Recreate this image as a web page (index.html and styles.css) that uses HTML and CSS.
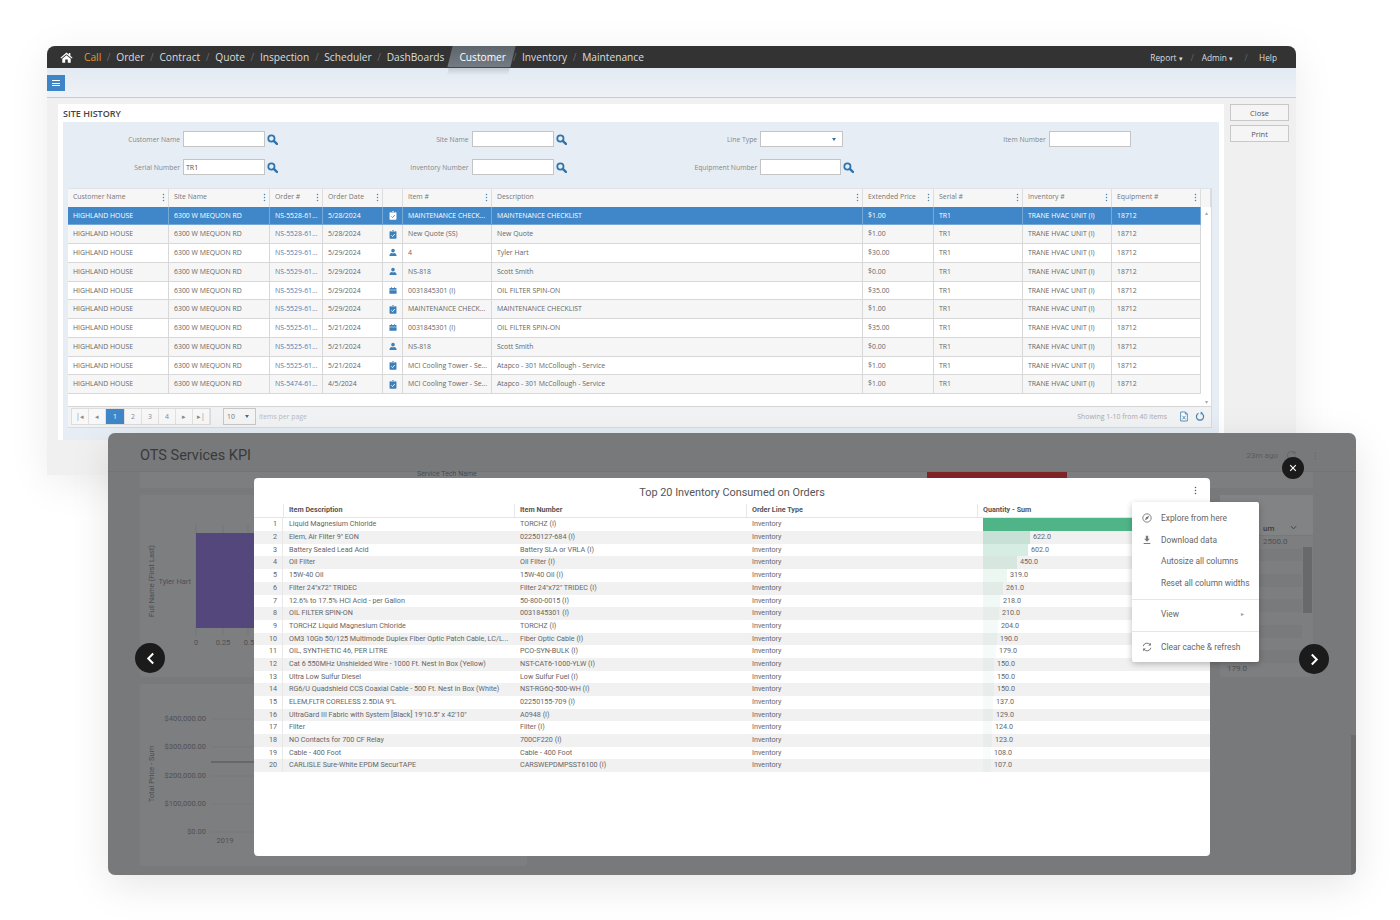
FILE: index.html
```html
<!DOCTYPE html>
<html lang="en">
<head>
    <meta charset="UTF-8">
    <title>Site History</title>
    <link rel="stylesheet" href="styles.css">
</head>
<body>
    <svg class="icon-defs" width="0" height="0">
        <symbol id="i-search" viewBox="0 0 12 12">
            <circle cx="4.8" cy="4.8" r="3.4" fill="none" stroke="currentColor" stroke-width="1.9"/>
            <path d="M7.4 7.4L10.8 10.8" stroke="currentColor" stroke-width="2.6" stroke-linecap="round"/>
        </symbol>
        <symbol id="i-clip" viewBox="0 0 10 12">
            <path d="M1.2 1.6H3.2V2.8H6.8V1.6H8.8A1 1 0 0 1 9.6 2.6V10.8A1 1 0 0 1 8.8 11.6H1.2A1 1 0 0 1 .4 10.8V2.6A1 1 0 0 1 1.2 1.6Z" fill="currentColor"/>
            <rect x="3.8" y=".4" width="2.4" height="1.9" rx=".5" fill="currentColor"/>
            <path d="M2.8 7.2L4.4 8.8L7.3 5.4" fill="none" stroke="var(--check, #fff)" stroke-width="1.2"/>
        </symbol>
        <symbol id="i-user" viewBox="0 0 12 12">
            <circle cx="6" cy="3.2" r="2.7" fill="currentColor"/>
            <path d="M.6 11.4C.6 8.2 2.6 6.8 4 6.6L6 7.4L8 6.6C9.4 6.8 11.4 8.2 11.4 11.4Z" fill="currentColor"/>
        </symbol>
        <symbol id="i-case" viewBox="0 0 12 12">
            <path d="M3 1H4.4V2.2H7.6V1H9V2.2H10.4A1 1 0 0 1 11.4 3.2V5H.6V3.2A1 1 0 0 1 1.6 2.2H3Z" fill="currentColor"/>
            <path d="M.6 5.8H11.4V10A1 1 0 0 1 10.4 11H1.6A1 1 0 0 1 .6 10Z" fill="currentColor"/>
        </symbol>
        <symbol id="i-dots" viewBox="0 0 4 12">
            <circle cx="2" cy="2" r="1"/><circle cx="2" cy="6" r="1"/><circle cx="2" cy="10" r="1"/>
        </symbol>
    </svg>

    <div class="app-window">
        <div class="topbar">
            <nav class="nav-main">
                <svg class="home-icon" viewBox="0 0 14 12"><path d="M7 .6L.4 6.3L1.2 7.2L7 2.4L12.8 7.2L13.6 6.3L11.2 4.2V1.2H9.6V2.8Z" fill="#fff"/><path d="M7 3.6L2.4 7.4V11.6H5.6V8.2H8.4V11.6H11.6V7.4Z" fill="#fff"/></svg>
                <a class="nav-call">Call</a><i>/</i>
                <a>Order</a><i>/</i>
                <a>Contract</a><i>/</i>
                <a>Quote</a><i>/</i>
                <a>Inspection</a><i>/</i>
                <a>Scheduler</a><i>/</i>
                <a>DashBoards</a><i>/</i>
                <a class="nav-active">Customer</a><i>/</i>
                <a>Inventory</a><i>/</i>
                <a>Maintenance</a>
            </nav>
            <nav class="nav-side">
                <a>Report <em>▾</em></a><i>/</i>
                <a>Admin <em>▾</em></a><i class="wide">/</i>
                <a>Help</a>
            </nav>
        </div>
        <div class="toolbar">
            <button class="menu-button"><span></span><span></span><span></span></button>
        </div>
        <div class="content">
            <div class="history-card">
                <h1>SITE HISTORY</h1>
                <div class="history-panel">
                    <div class="filters">
                        <div class="field"><label>Customer Name</label><input type="text"><svg class="search"><use href="#i-search"/></svg></div>
                        <div class="field"><label>Site Name</label><input type="text"><svg class="search"><use href="#i-search"/></svg></div>
                        <div class="field"><label>Line Type</label><div class="fake-select"><b></b></div></div>
                        <div class="field"><label>Item Number</label><input type="text"></div>
                        <div class="field"><label>Serial Number</label><input type="text" value="TR1"><svg class="search"><use href="#i-search"/></svg></div>
                        <div class="field"><label>Inventory Number</label><input type="text"><svg class="search"><use href="#i-search"/></svg></div>
                        <div class="field"><label>Equipment Number</label><input class="short" type="text"><svg class="search"><use href="#i-search"/></svg></div>
                    </div>

                    <div class="grid">
                        <div class="grid-head">
                            <div>Customer Name<svg class="dots"><use href="#i-dots"/></svg></div>
                            <div>Site Name<svg class="dots"><use href="#i-dots"/></svg></div>
                            <div>Order #<svg class="dots"><use href="#i-dots"/></svg></div>
                            <div>Order Date<svg class="dots"><use href="#i-dots"/></svg></div>
                            <div></div>
                            <div>Item #<svg class="dots"><use href="#i-dots"/></svg></div>
                            <div>Description<svg class="dots"><use href="#i-dots"/></svg></div>
                            <div>Extended Price<svg class="dots"><use href="#i-dots"/></svg></div>
                            <div>Serial #<svg class="dots"><use href="#i-dots"/></svg></div>
                            <div>Inventory #<svg class="dots"><use href="#i-dots"/></svg></div>
                            <div>Equipment #<svg class="dots"><use href="#i-dots"/></svg></div>
                            <div class="scroll-head"></div>
                        </div>
                        <div class="grid-scroller">
                            <div class="grid-body">
                                <div class="grid-row selected"><div>HIGHLAND HOUSE</div><div>6300 W MEQUON RD</div><div class="order">NS-5528-61...</div><div>5/28/2024</div><div class="type"><svg><use href="#i-clip"/></svg></div><div>MAINTENANCE CHECK...</div><div>MAINTENANCE CHECKLIST</div><div>$1.00</div><div>TR1</div><div>TRANE HVAC UNIT (I)</div><div>18712</div></div>
                                <div class="grid-row"><div>HIGHLAND HOUSE</div><div>6300 W MEQUON RD</div><div class="order">NS-5528-61...</div><div>5/28/2024</div><div class="type"><svg><use href="#i-clip"/></svg></div><div>New Quote (SS)</div><div>New Quote</div><div>$1.00</div><div>TR1</div><div>TRANE HVAC UNIT (I)</div><div>18712</div></div>
                                <div class="grid-row"><div>HIGHLAND HOUSE</div><div>6300 W MEQUON RD</div><div class="order">NS-5529-61...</div><div>5/29/2024</div><div class="type"><svg><use href="#i-user"/></svg></div><div>4</div><div>Tyler Hart</div><div>$30.00</div><div>TR1</div><div>TRANE HVAC UNIT (I)</div><div>18712</div></div>
                                <div class="grid-row"><div>HIGHLAND HOUSE</div><div>6300 W MEQUON RD</div><div class="order">NS-5529-61...</div><div>5/29/2024</div><div class="type"><svg><use href="#i-user"/></svg></div><div>NS-818</div><div>Scott Smith</div><div>$0.00</div><div>TR1</div><div>TRANE HVAC UNIT (I)</div><div>18712</div></div>
                                <div class="grid-row"><div>HIGHLAND HOUSE</div><div>6300 W MEQUON RD</div><div class="order">NS-5529-61...</div><div>5/29/2024</div><div class="type"><svg><use href="#i-case"/></svg></div><div>0031845301 (I)</div><div>OIL FILTER SPIN-ON</div><div>$35.00</div><div>TR1</div><div>TRANE HVAC UNIT (I)</div><div>18712</div></div>
                                <div class="grid-row"><div>HIGHLAND HOUSE</div><div>6300 W MEQUON RD</div><div class="order">NS-5529-61...</div><div>5/29/2024</div><div class="type"><svg><use href="#i-clip"/></svg></div><div>MAINTENANCE CHECK...</div><div>MAINTENANCE CHECKLIST</div><div>$1.00</div><div>TR1</div><div>TRANE HVAC UNIT (I)</div><div>18712</div></div>
                                <div class="grid-row"><div>HIGHLAND HOUSE</div><div>6300 W MEQUON RD</div><div class="order">NS-5525-61...</div><div>5/21/2024</div><div class="type"><svg><use href="#i-case"/></svg></div><div>0031845301 (I)</div><div>OIL FILTER SPIN-ON</div><div>$35.00</div><div>TR1</div><div>TRANE HVAC UNIT (I)</div><div>18712</div></div>
                                <div class="grid-row"><div>HIGHLAND HOUSE</div><div>6300 W MEQUON RD</div><div class="order">NS-5525-61...</div><div>5/21/2024</div><div class="type"><svg><use href="#i-user"/></svg></div><div>NS-818</div><div>Scott Smith</div><div>$0.00</div><div>TR1</div><div>TRANE HVAC UNIT (I)</div><div>18712</div></div>
                                <div class="grid-row"><div>HIGHLAND HOUSE</div><div>6300 W MEQUON RD</div><div class="order">NS-5525-61...</div><div>5/21/2024</div><div class="type"><svg><use href="#i-clip"/></svg></div><div>MCI Cooling Tower - Se...</div><div>Atapco - 301 McCollough - Service</div><div>$1.00</div><div>TR1</div><div>TRANE HVAC UNIT (I)</div><div>18712</div></div>
                                <div class="grid-row"><div>HIGHLAND HOUSE</div><div>6300 W MEQUON RD</div><div class="order">NS-5474-61...</div><div>4/5/2024</div><div class="type"><svg><use href="#i-clip"/></svg></div><div>MCI Cooling Tower - Se...</div><div>Atapco - 301 McCollough - Service</div><div>$1.00</div><div>TR1</div><div>TRANE HVAC UNIT (I)</div><div>18712</div></div>
                            </div>
                            <div class="grid-scrollbar"><span>▴</span><span>▾</span></div>
                        </div>
                        <div class="pager">
                            <div class="pages">
                                <a>|◂</a><a>◂</a><a class="current">1</a><a>2</a><a>3</a><a>4</a><a>▸</a><a>▸|</a>
                            </div>
                            <div class="page-size">10<b></b></div>
                            <span class="page-label">items per page</span>
                            <span class="page-count">Showing 1-10 from 40 items</span>
                            <svg class="pager-icon" viewBox="0 0 12 12"><path d="M2 .6H7.6L10 3V11.4H2Z" fill="#fff" stroke="#3d7fb5"/><path d="M7.6 .6V3H10M4.2 5.2L7.8 9.4M7.8 5.2L4.2 9.4" fill="none" stroke="#3d7fb5"/></svg>
                            <svg class="pager-icon" viewBox="0 0 12 12"><path d="M7.8 2.2A4.3 4.3 0 1 1 4.2 2.2" fill="none" stroke="#3d7fb5" stroke-width="1.4"/><path d="M6.8 .2V3.8L9.6 1.8Z" fill="#3d7fb5"/></svg>
                        </div>
                    </div>
                </div>
            </div>
            <div class="side-buttons">
                <button>Close</button>
                <button>Print</button>
            </div>
        </div>
    </div>

    <div class="kpi-window">
        <header class="kpi-header">
            <h2>OTS Services KPI</h2>
            <span class="kpi-age">23m ago</span>
            <svg class="kpi-refresh" viewBox="0 0 12 12"><path d="M9.6 3.4A4.4 4.4 0 1 0 10.4 6" fill="none" stroke="#66676a" stroke-width="1.1"/><path d="M10.4 1V4H7.4Z" fill="#66676a"/></svg>
            <svg class="kpi-dots"><use href="#i-dots"/></svg>
        </header>
        <div class="kpi-body">
            <div class="kpi-card kpi-top">
                <span class="tech-label">Service Tech Name</span>
                <span class="tech-bar"></span>
            </div>
            <div class="kpi-card kpi-person">
                <svg width="387" height="182">
                    <g stroke="#737476" stroke-width="1">
                        <path d="M56 30V140M83 30V140M108 30V140"/>
                    </g>
                    <rect x="56" y="38" width="331" height="95" fill="#54477b"/>
                    <text class="axis-title" transform="translate(14 86) rotate(-90)" text-anchor="middle">Full Name (First Last)</text>
                    <text class="axis" x="51" y="89" text-anchor="end">Tyler Hart</text>
                    <text class="axis" x="56" y="150" text-anchor="middle">0</text>
                    <text class="axis" x="83" y="150" text-anchor="middle">0.25</text>
                    <text class="axis" x="109" y="150" text-anchor="middle">0.5</text>
                </svg>
            </div>
            <div class="kpi-card kpi-side">
                <div class="side-head"><span>um</span><svg viewBox="0 0 8 5"><path d="M1 1L4 4L7 1" fill="none" stroke="#3f4042" stroke-width="1.1"/></svg></div>
                <div class="side-rows">
                    <div class="side-list">
                        <div class="side-first">2500.0</div><div></div><div></div><div></div><div></div><div></div><div></div><div></div><div></div><div></div><div class="side-last">179.0</div>
                    </div>
                    <div class="side-scroll"><span></span></div>
                </div>
            </div>
            <div class="kpi-card kpi-price">
                <svg width="387" height="182">
                    <g stroke="#77787a" stroke-width="1">
                        <path d="M71 35H387M71 63H387M71 92H387M71 120H387M71 148H387"/>
                    </g>
                    <path d="M71 78H387" stroke="#505154" stroke-width="1"/>
                    <path d="M120 148H140" stroke="#5f6f7e" stroke-width="1"/>
                    <text class="axis-title" transform="translate(14 90) rotate(-90)" text-anchor="middle">Total Price - Sum</text>
                    <text class="axis" x="66" y="37" text-anchor="end">$400,000.00</text>
                    <text class="axis" x="66" y="65" text-anchor="end">$300,000.00</text>
                    <text class="axis" x="66" y="94" text-anchor="end">$200,000.00</text>
                    <text class="axis" x="66" y="122" text-anchor="end">$100,000.00</text>
                    <text class="axis" x="66" y="150" text-anchor="end">$0.00</text>
                    <text class="axis" x="85" y="159" text-anchor="middle">2019</text>
                </svg>
            </div>
        </div>
        <div class="kpi-scrollbar"><span></span></div>

        <div class="modal">
            <div class="modal-title">Top 20 Inventory Consumed on Orders</div>
            <svg class="modal-dots"><use href="#i-dots"/></svg>
            <div class="modal-table">
                <div class="m-head"><div></div><div>Item Description</div><div>Item Number</div><div>Order Line Type</div><div>Quantity - Sum</div></div>
                <div class="m-row"><div>1</div><div>Liquid Magnesium Chloride</div><div>TORCHZ (I)</div><div>Inventory</div><div class="qty"><span class="qty-bar top-bar" style="width:189px"></span></div></div>
                <div class="m-row"><div>2</div><div>Elem, Air Filter 9" EON</div><div>02250127-684 (I)</div><div>Inventory</div><div class="qty"><span class="qty-bar" style="width:47px;opacity:.25"></span>622.0</div></div>
                <div class="m-row"><div>3</div><div>Battery Sealed Lead Acid</div><div>Battery SLA or VRLA (I)</div><div>Inventory</div><div class="qty"><span class="qty-bar" style="width:45px;opacity:.24"></span>602.0</div></div>
                <div class="m-row"><div>4</div><div>Oil Filter</div><div>Oil Filter (I)</div><div>Inventory</div><div class="qty"><span class="qty-bar" style="width:34px;opacity:.16"></span>450.0</div></div>
                <div class="m-row"><div>5</div><div>15W-40 Oil</div><div>15W-40 Oil (I)</div><div>Inventory</div><div class="qty"><span class="qty-bar" style="width:24px;opacity:.11"></span>319.0</div></div>
                <div class="m-row"><div>6</div><div>Filter 24"x72" TRIDEC</div><div>Filter 24"x72" TRIDEC (I)</div><div>Inventory</div><div class="qty"><span class="qty-bar" style="width:20px;opacity:.09"></span>261.0</div></div>
                <div class="m-row"><div>7</div><div>12.6% to 17.5% HCl Acid - per Gallon</div><div>50-800-0015 (I)</div><div>Inventory</div><div class="qty"><span class="qty-bar" style="width:17px;opacity:.08"></span>218.0</div></div>
                <div class="m-row"><div>8</div><div>OIL FILTER SPIN-ON</div><div>0031845301 (I)</div><div>Inventory</div><div class="qty"><span class="qty-bar" style="width:16px;opacity:.07"></span>210.0</div></div>
                <div class="m-row"><div>9</div><div>TORCHZ Liquid Magnesium Chloride</div><div>TORCHZ (I)</div><div>Inventory</div><div class="qty"><span class="qty-bar" style="width:15px;opacity:.07"></span>204.0</div></div>
                <div class="m-row"><div>10</div><div>OM3 10Gb 50/125 Multimode Duplex Fiber Optic Patch Cable, LC/L...</div><div>Fiber Optic Cable (I)</div><div>Inventory</div><div class="qty"><span class="qty-bar" style="width:14px;opacity:.07"></span>190.0</div></div>
                <div class="m-row"><div>11</div><div>OIL, SYNTHETIC 46, PER LITRE</div><div>PCO-SYN-BULK (I)</div><div>Inventory</div><div class="qty"><span class="qty-bar" style="width:13px;opacity:.06"></span>179.0</div></div>
                <div class="m-row"><div>12</div><div>Cat 6 550MHz Unshielded Wire - 1000 Ft. Nest In Box (Yellow)</div><div>NST-CAT6-1000-YLW (I)</div><div>Inventory</div><div class="qty"><span class="qty-bar" style="width:11px;opacity:.05"></span>150.0</div></div>
                <div class="m-row"><div>13</div><div>Ultra Low Sulfur Diesel</div><div>Low Sulfur Fuel (I)</div><div>Inventory</div><div class="qty"><span class="qty-bar" style="width:11px;opacity:.05"></span>150.0</div></div>
                <div class="m-row"><div>14</div><div>RG6/U Quadshield CCS Coaxial Cable - 500 Ft. Nest in Box (White)</div><div>NST-RG6Q-500-WH (I)</div><div>Inventory</div><div class="qty"><span class="qty-bar" style="width:11px;opacity:.05"></span>150.0</div></div>
                <div class="m-row"><div>15</div><div>ELEM,FLTR CORELESS 2.5DIA 9"L</div><div>02250155-709 (I)</div><div>Inventory</div><div class="qty"><span class="qty-bar" style="width:10px;opacity:.05"></span>137.0</div></div>
                <div class="m-row"><div>16</div><div>UltraGard III Fabric with System [Black] 19'10.5" x 42'10"</div><div>A0948 (I)</div><div>Inventory</div><div class="qty"><span class="qty-bar" style="width:10px;opacity:.05"></span>129.0</div></div>
                <div class="m-row"><div>17</div><div>Filter</div><div>Filter (I)</div><div>Inventory</div><div class="qty"><span class="qty-bar" style="width:9px;opacity:.05"></span>124.0</div></div>
                <div class="m-row"><div>18</div><div>NO Contacts for 700 CF Relay</div><div>700CF220 (I)</div><div>Inventory</div><div class="qty"><span class="qty-bar" style="width:9px;opacity:.05"></span>123.0</div></div>
                <div class="m-row"><div>19</div><div>Cable - 400 Foot</div><div>Cable - 400 Foot</div><div>Inventory</div><div class="qty"><span class="qty-bar" style="width:8px;opacity:.04"></span>108.0</div></div>
                <div class="m-row"><div>20</div><div>CARLISLE Sure-White EPDM SecurTAPE</div><div>CARSWEPDMPSST6100 (I)</div><div>Inventory</div><div class="qty"><span class="qty-bar" style="width:8px;opacity:.04"></span>107.0</div></div>
            </div>
        </div>

        <div class="chart-menu">
            <div class="menu-group">
                <div class="menu-item"><svg viewBox="0 0 12 12"><circle cx="6" cy="6" r="5" fill="none" stroke="#6b6b6b"/><path d="M8.6 3.4L7 7L3.4 8.6L5 5Z" fill="#6b6b6b"/></svg>Explore from here</div>
                <div class="menu-item"><svg viewBox="0 0 12 12"><path d="M4.6 1H7.4V4.6H9.4L6 8L2.6 4.6H4.6ZM2 9.6H10V10.8H2Z" fill="#7a7a7a"/></svg>Download data</div>
                <div class="menu-item menu-plain">Autosize all columns</div>
                <div class="menu-item menu-plain">Reset all column widths</div>
            </div>
            <div class="menu-group menu-view">
                <div class="menu-item menu-plain">View<span class="menu-arrow">▸</span></div>
            </div>
            <div class="menu-group menu-clear">
                <div class="menu-item"><svg viewBox="0 0 12 12"><path d="M1.4 5A4.8 4.8 0 0 1 9.8 3.2M10.6 7A4.8 4.8 0 0 1 2.2 8.8" fill="none" stroke="#6b6b6b" stroke-width="1.1"/><path d="M10.6 1V4.2H7.4ZM1.4 11V7.8H4.6Z" fill="#6b6b6b"/></svg>Clear cache &amp; refresh</div>
            </div>
        </div>

        <button class="round-btn close-btn"><svg viewBox="0 0 10 10"><path d="M1.5 1.5L8.5 8.5M8.5 1.5L1.5 8.5" stroke="#fff" stroke-width="1.4"/></svg></button>
        <button class="round-btn prev-btn"><svg viewBox="0 0 10 14"><path d="M8 1.5L2.5 7L8 12.5" fill="none" stroke="#fff" stroke-width="2.2"/></svg></button>
        <button class="round-btn next-btn"><svg viewBox="0 0 10 14"><path d="M2 1.5L7.5 7L2 12.5" fill="none" stroke="#fff" stroke-width="2.2"/></svg></button>
    </div>
</body>
</html>
```

FILE: styles.css
```css
* {
    box-sizing: border-box;
}
html, body {
    margin: 0;
    height: 920px;
    overflow: hidden;
}
body {
    position: relative;
    background-color: #fff;
    font-family: "Open Sans", sans-serif;
    color: #555;
}
.icon-defs {
    position: absolute;
}

/* main app window */
.app-window {
    position: absolute;
    left: 47px;
    top: 46px;
    width: 1249px;
    height: 429px;
    display: flex;
    flex-direction: column;
    background-color: #f0f0f0;
    border-radius: 8px 8px 0 0;
    box-shadow: 0 8px 40px rgba(0,0,0,0.08);
}
.topbar {
    height: 22px;
    flex-shrink: 0;
    display: flex;
    justify-content: space-between;
    align-items: center;
    background-color: #333;
    border-radius: 8px 8px 0 0;
    color: #ddd;
}
.nav-main {
    display: flex;
    align-items: center;
    padding-left: 13px;
    font-size: 10.2px;
}
.nav-main i, .nav-side i {
    font-style: normal;
    color: #666;
}
.nav-main i {
    width: 15px;
    text-align: center;
}
.home-icon {
    width: 13px;
    height: 11px;
    margin-right: 11px;
}
.nav-call {
    color: #e8932c;
}
.nav-active {
    position: relative;
    z-index: 0;
    margin-right: 1px;
    color: #fff;
}
.nav-active::before {
    content: "";
    position: absolute;
    left: -9px;
    right: -7px;
    top: -4px;
    height: 21px;
    background: linear-gradient(#5d646b, #747b83);
    transform: skewX(-14deg);
    z-index: -1;
}
.nav-active::after {
    content: "";
    position: absolute;
    left: -11px;
    right: -3px;
    top: 17px;
    height: 8px;
    background: linear-gradient(rgba(110,120,130,0.3), rgba(110,120,130,0));
    transform: skewX(-14deg);
}
.nav-side {
    display: flex;
    align-items: center;
    padding-right: 19px;
    font-size: 8.3px;
}
.nav-side em {
    font-style: normal;
    font-size: 6.5px;
}
.nav-side i {
    width: 19px;
    text-align: center;
}
.nav-side i.wide {
    width: 26px;
}
.toolbar {
    height: 30px;
    flex-shrink: 0;
    padding-top: 7px;
    background: linear-gradient(#e3eaf2, #eef2f6);
    border-bottom: 1px solid #c9c9c9;
}
.menu-button {
    display: flex;
    flex-direction: column;
    justify-content: center;
    gap: 1.5px;
    width: 18px;
    height: 16px;
    padding: 0 5px;
    border: none;
    background-color: #3d85c6;
}
.menu-button span {
    height: 1px;
    background-color: #fff;
}
.content {
    display: flex;
    padding: 6px 7px 0 11px;
    gap: 6px;
}
.history-card {
    width: 1166px;
    height: 336px;
    padding: 0 5px;
    background-color: #fff;
}
.history-card h1 {
    margin: 0;
    height: 18px;
    font-size: 9px;
    font-weight: 600;
    line-height: 20px;
    color: #444;
}
.history-panel {
    height: 318px;
    padding: 9px 5px 0;
    background-color: #e6edf4;
}
.side-buttons {
    display: flex;
    flex-direction: column;
    gap: 4px;
    width: 59px;
}
.side-buttons button {
    height: 17px;
    padding: 0;
    border: 1px solid #c8c8c8;
    background-color: #f5f5f5;
    font-family: inherit;
    font-size: 7.5px;
    color: #555;
}

/* filter form */
.filters {
    display: grid;
    grid-template-columns: repeat(4, 288.6px);
    grid-auto-rows: 16px;
    row-gap: 12px;
    margin-left: -5px;
    margin-bottom: 13px;
}
.field {
    display: flex;
    align-items: center;
    gap: 3px;
}
.field label {
    width: 117px;
    text-align: right;
    font-size: 6.8px;
    color: #888;
}
.field input, .fake-select {
    width: 82px;
    height: 16px;
    padding: 0 2px;
    border: 1px solid #c4c4c4;
    background-color: #fff;
    font-family: inherit;
    font-size: 7px;
    color: #555;
}
.field input.short {
    width: 81px;
}
.fake-select {
    position: relative;
    width: 83px;
}
.fake-select b, .page-size b {
    position: absolute;
    right: 6px;
    top: 6px;
    border-left: 2.5px solid transparent;
    border-right: 2.5px solid transparent;
    border-top: 3px solid #3a6f9e;
}
.search {
    width: 11px;
    height: 11px;
    margin-left: -1px;
    color: #2f74ad;
}

/* site history grid */
.grid {
    width: 1144px;
    height: 240px;
    display: flex;
    flex-direction: column;
    background-color: #fff;
    border: 1px solid #d5dbe2;
    border-width: 0 1px 1px 0;
}
.grid-head, .grid-row {
    display: grid;
    grid-template-columns: 101px 101px 53px 60px 20px 89px 371px 71px 89px 89px 89px;
}
.grid-head {
    grid-template-columns: 101px 101px 53px 60px 20px 89px 371px 71px 89px 89px 89px 1fr;
    height: 18.5px;
    flex-shrink: 0;
    background-color: #f6f6f6;
    border-top: 1px solid #dfe3e8;
    font-size: 6.9px;
    color: #777;
}
.grid-head > div {
    position: relative;
    padding-left: 5px;
    line-height: 15px;
    border-right: 1px solid #ddd;
}
.dots {
    position: absolute;
    right: 3px;
    top: 4px;
    width: 3px;
    height: 9px;
    fill: #4b86b8;
}
.grid-scroller {
    display: flex;
    height: 199px;
    flex-shrink: 0;
}
.grid-body {
    width: 1133px;
}
.grid-row {
    height: 18.75px;
    font-size: 6.9px;
    line-height: 18px;
    color: #666;
}
.grid-row > div {
    padding-left: 5px;
    white-space: nowrap;
    overflow: hidden;
    border-right: 1px solid #d8d8d8;
    border-bottom: 1px solid #d8d8d8;
}
.grid-row:nth-child(even) {
    background-color: #f6f6f6;
}
.grid-row .order {
    color: #4f7fb5;
}
.grid-row .type {
    display: flex;
    justify-content: center;
    align-items: center;
    padding: 0;
    color: #3d7fb8;
}
.type svg {
    width: 8px;
    height: 9px;
}
.grid-row.selected {
    background-color: #3f87c8;
    color: #fff;
}
.grid-row.selected > div {
    border-color: #76a9d8;
}
.grid-row.selected .order {
    color: #fff;
}
.grid-row.selected .type {
    color: #fff;
    --check: #3f87c8;
}
.grid-scrollbar {
    flex: 1;
    display: flex;
    flex-direction: column;
    justify-content: space-between;
    align-items: center;
    padding: 2px 0 0;
    font-size: 6px;
    color: #aaa;
}
.pager {
    flex: 1;
    display: flex;
    align-items: center;
    padding-left: 3px;
    background-color: #f2f3f5;
    border-top: 1px solid #d5d5d5;
    font-size: 6.9px;
    color: #aaa;
}
.pages {
    display: flex;
    height: 17px;
    background-color: #f8f8f8;
    border: 1px solid #dcdcdc;
}
.pages a {
    width: 17px;
    text-align: center;
    line-height: 15px;
    color: #8a8a8a;
    border-right: 1px solid #e2e2e2;
}
.pages a.current {
    width: 19px;
    color: #fff;
    background-color: #3f87c8;
}
.page-size {
    position: relative;
    width: 33px;
    height: 17px;
    margin-left: 12px;
    padding-left: 3px;
    line-height: 15px;
    color: #777;
    background-color: #f5f5f5;
    border: 1px solid #c8c8c8;
}
.page-label {
    margin-left: 3px;
    color: #bbb;
}
.page-count {
    margin-left: auto;
    margin-right: 12px;
}
.pager-icon {
    width: 10px;
    height: 11px;
    margin-right: 6px;
}

/* dashboard window */
.kpi-window {
    position: absolute;
    left: 108px;
    top: 433px;
    width: 1248px;
    height: 442px;
    background-color: #78797b;
    border-radius: 7px;
    box-shadow: 0 10px 40px rgba(0,0,0,0.1);
    font-family: Roboto, sans-serif;
}
.kpi-header {
    height: 39px;
    display: flex;
    align-items: center;
    padding: 7px 39px 0 32px;
    border-bottom: 1px solid #737476;
}
.kpi-header h2 {
    flex: 1;
    margin: 0;
    font-size: 14.5px;
    font-weight: 400;
    color: #38393b;
}
.kpi-age {
    font-size: 8px;
    color: #5b5c5e;
}
.kpi-refresh {
    width: 11px;
    height: 11px;
    margin-left: 8px;
}
.kpi-dots {
    width: 3px;
    height: 10px;
    margin-left: 17px;
    fill: #66676a;
}
.kpi-body {
    display: grid;
    grid-template-columns: 387px 1fr 93px;
    grid-template-rows: 16px 182px 182px;
    gap: 7px 0;
    padding: 0 43px 0 32px;
}
.kpi-card {
    background-color: #7d7e80;
    border-radius: 3px;
}
.kpi-top {
    grid-column: 1 / 4;
    position: relative;
    border-radius: 0 0 3px 3px;
}
.tech-label {
    position: absolute;
    left: 277px;
    top: -2px;
    font-size: 7px;
    color: #4a4b4d;
}
.tech-bar {
    position: absolute;
    left: 787px;
    top: 0;
    width: 140px;
    height: 6px;
    background-color: #7e2326;
}
.kpi-person {
    grid-column: 1;
}
.kpi-price {
    grid-column: 1;
}
.kpi-side {
    grid-column: 3;
    grid-row: 2;
    display: flex;
    flex-direction: column;
}
.axis {
    font-family: Roboto, sans-serif;
    font-size: 7.5px;
    fill: #4f5054;
}
.axis-title {
    font-family: Roboto, sans-serif;
    font-size: 7.5px;
    fill: #4c4d51;
}
.side-head {
    height: 41px;
    display: flex;
    align-items: flex-end;
    justify-content: space-between;
    padding: 0 16px 2px 43px;
    background-color: #828385;
    border-bottom: 1px solid #77787a;
    font-size: 8px;
    font-weight: 500;
    color: #3f4042;
}
.side-head svg {
    width: 7px;
    height: 5px;
    margin-bottom: 3px;
}
.side-rows {
    flex: 1;
    display: flex;
}
.side-list {
    flex: 1;
    font-size: 8px;
    color: #505154;
}
.side-list div {
    height: 12.7px;
    line-height: 12.7px;
}
.side-list div:nth-child(even) {
    background-color: #797a7c;
}
.side-first {
    padding-left: 43px;
}
.side-last {
    padding-left: 7px;
}
.side-scroll {
    width: 11px;
    padding-top: 11px;
}
.side-scroll span {
    display: block;
    height: 66px;
    margin: 0 1px;
    background-color: #68696b;
}
.kpi-scrollbar {
    position: absolute;
    right: 0;
    top: 39px;
    bottom: 0;
    width: 5px;
    display: flex;
    align-items: flex-end;
}
.kpi-scrollbar span {
    width: 100%;
    height: 140px;
    background-color: #6b6c6e;
    border-radius: 0 0 6px 0;
}

/* modal with the inventory table */
.modal {
    position: absolute;
    left: 146px;
    top: 45px;
    width: 956px;
    height: 378px;
    background-color: #fff;
    border-radius: 4px;
}
.modal-title {
    height: 26px;
    padding-top: 8px;
    text-align: center;
    font-size: 10.9px;
    color: #555;
}
.modal-dots {
    position: absolute;
    right: 13px;
    top: 8px;
    width: 3px;
    height: 9px;
    fill: #555;
}
.m-head, .m-row {
    display: grid;
    grid-template-columns: 29px 231px 232px 231px 233px;
}
.m-head {
    height: 14.4px;
    border-bottom: 1px solid #e4e4e4;
    font-size: 7.2px;
    font-weight: 700;
    line-height: 12px;
    color: #555;
}
.m-head > div {
    padding-left: 5px;
    border-left: 1px solid #e8e8e8;
}
.m-head > div:first-child {
    border: none;
}
.m-row {
    height: 12.7px;
    font-size: 7.2px;
    line-height: 12.7px;
    color: #666;
}
.m-row:nth-child(odd) {
    background-color: #f1f1f1;
}
.m-row > div {
    padding-left: 6px;
    white-space: nowrap;
    overflow: hidden;
}
.m-row > div:first-child {
    padding: 0 5px 0 0;
    text-align: right;
    border-right: 1px solid #e8e8e8;
}
.m-row .qty {
    display: flex;
}
.qty-bar {
    flex-shrink: 0;
    height: 100%;
    margin-right: 3px;
    background-color: #4fb588;
}

/* chart menu */
.chart-menu {
    position: absolute;
    left: 1024px;
    top: 69px;
    width: 127px;
    height: 160px;
    background-color: #fff;
    border-radius: 2px;
    box-shadow: 0 2px 6px rgba(0,0,0,0.25);
    font-size: 8.4px;
    color: #666;
}
.menu-group {
    padding-top: 5px;
}
.menu-view, .menu-clear {
    border-top: 1px solid #e6e6e6;
}
.menu-view {
    height: 32px;
    margin-top: 5px;
    padding-top: 3px;
}
.menu-clear {
    padding-top: 4px;
}
.menu-item {
    position: relative;
    display: flex;
    align-items: center;
    height: 21.7px;
    padding-left: 10px;
}
.menu-item svg {
    width: 10px;
    height: 10px;
    margin-right: 9px;
}
.menu-plain {
    padding-left: 29px;
}
.menu-arrow {
    position: absolute;
    right: 15px;
    font-size: 6px;
    color: #999;
}

/* round buttons */
.round-btn {
    position: absolute;
    display: flex;
    justify-content: center;
    align-items: center;
    padding: 0;
    border: none;
    border-radius: 50%;
    background-color: #1b1b1b;
}
.close-btn {
    left: 1174px;
    top: 24px;
    width: 22px;
    height: 22px;
}
.close-btn svg {
    width: 8px;
    height: 8px;
}
.prev-btn, .next-btn {
    width: 30px;
    height: 30px;
}
.prev-btn {
    left: 27px;
    top: 210px;
}
.next-btn {
    left: 1191px;
    top: 211px;
}
.prev-btn svg, .next-btn svg {
    width: 9px;
    height: 13px;
}
```
